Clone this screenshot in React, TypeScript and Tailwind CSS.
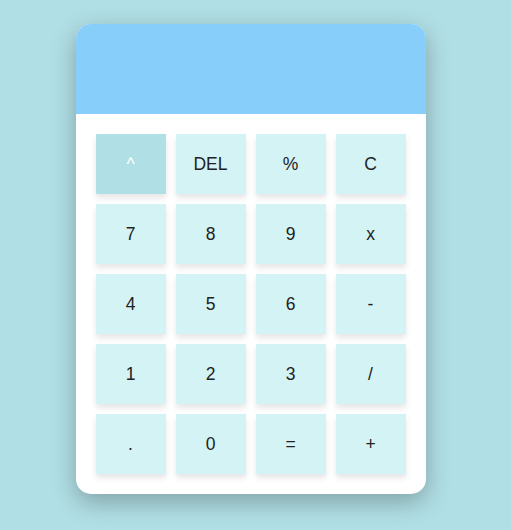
const keys = ['^', 'DEL', '%', 'C', '7', '8', '9', 'x', '4', '5', '6', '-', '1', '2', '3', '/', '.', '0', '=', '+']

export default function App() {
  return (
    <div className="min-h-screen bg-[#b0dfe5] flex justify-center pt-6 pr-[10px]" style={{ fontFamily: '"Liberation Sans", Arial, sans-serif' }}>
      <div className="w-[350px] h-[470px] bg-white rounded-[15px] overflow-hidden shadow-[0_8px_25px_rgba(0,0,0,0.28)]">
        <div className="h-[90px] bg-[#87cefa]" />
        <div className="grid grid-cols-4 gap-[10px] p-5">
          {keys.map((k, i) => (
            <button
              key={k}
              className={
                'h-[60px] text-[17.5px] shadow-[0_4px_6px_rgba(0,0,0,0.1)] ' +
                (i === 0 ? 'bg-[#b0dfe5] text-white' : 'bg-[#d4f3f5] text-[#222]')
              }
            >
              {k}
            </button>
          ))}
        </div>
      </div>
    </div>
  )
}
